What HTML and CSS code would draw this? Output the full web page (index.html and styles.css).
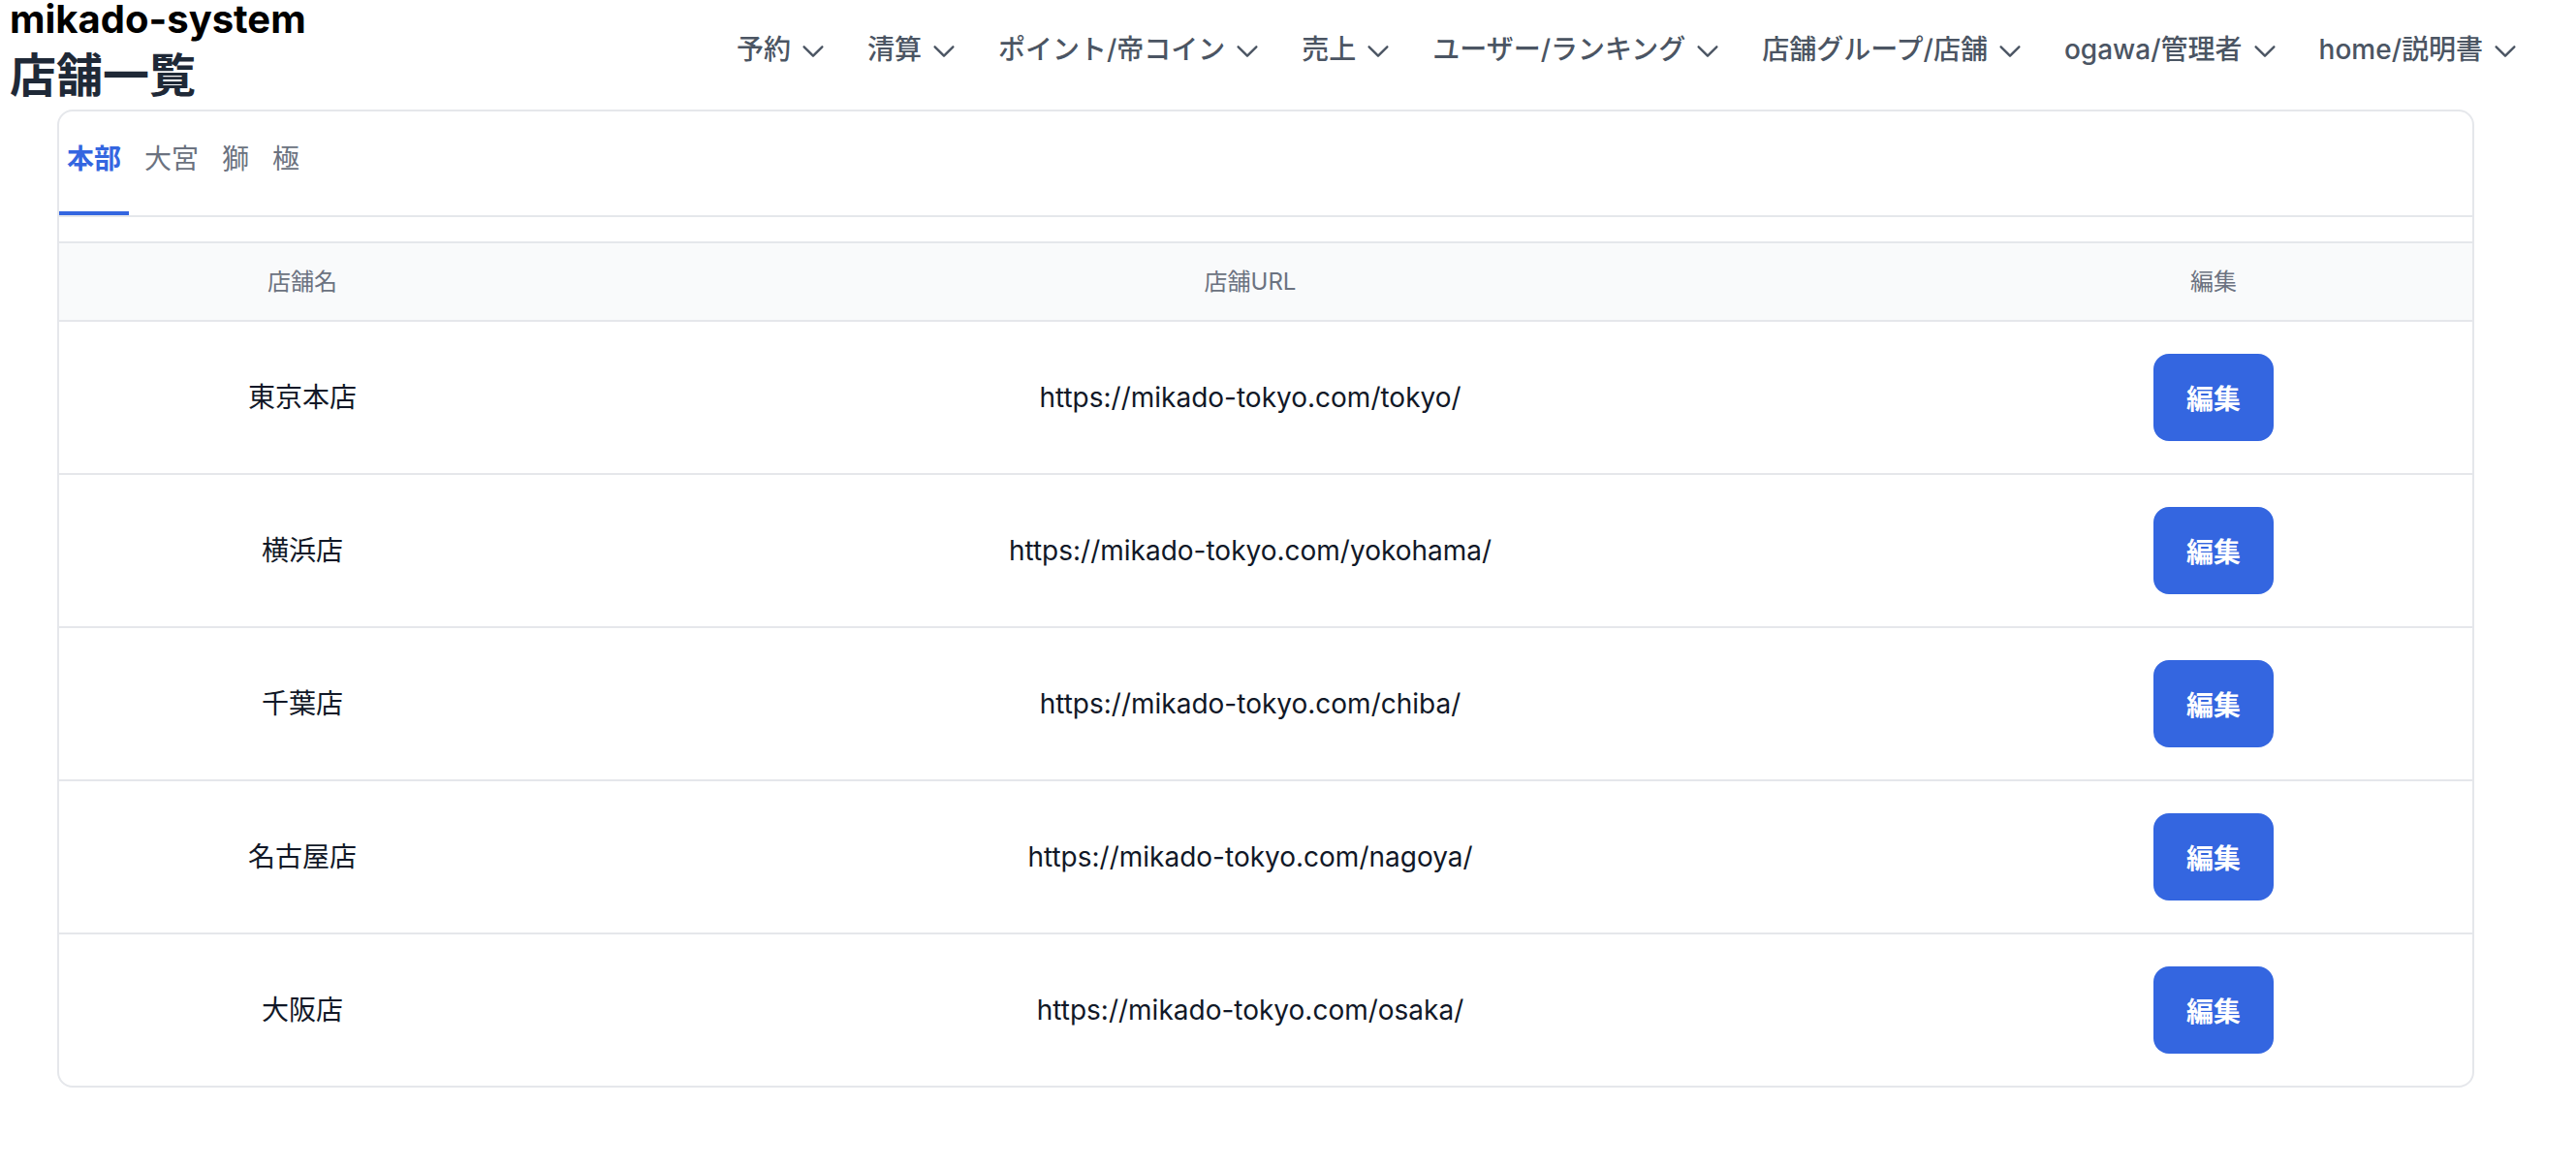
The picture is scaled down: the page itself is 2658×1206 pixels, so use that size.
FILE: index.html
```html
<!DOCTYPE html>
<html lang="ja">
<head>
<meta charset="utf-8">
<title>店舗一覧</title>
<link rel="stylesheet" href="styles.css">
</head>
<body>
<header class="topbar">
  <div class="brand">
    <div class="brand-name">mikado-system</div>
    <h1 class="page-title">店舗一覧</h1>
  </div>
  <nav class="menu">
    <a class="menu-item">予約<svg class="chev" viewBox="0 0 24 24"><path d="M19.5 8.25l-7.5 7.5-7.5-7.5"/></svg></a>
    <a class="menu-item">清算<svg class="chev" viewBox="0 0 24 24"><path d="M19.5 8.25l-7.5 7.5-7.5-7.5"/></svg></a>
    <a class="menu-item">ポイント/帝コイン<svg class="chev" viewBox="0 0 24 24"><path d="M19.5 8.25l-7.5 7.5-7.5-7.5"/></svg></a>
    <a class="menu-item">売上<svg class="chev" viewBox="0 0 24 24"><path d="M19.5 8.25l-7.5 7.5-7.5-7.5"/></svg></a>
    <a class="menu-item">ユーザー/ランキング<svg class="chev" viewBox="0 0 24 24"><path d="M19.5 8.25l-7.5 7.5-7.5-7.5"/></svg></a>
    <a class="menu-item">店舗グループ/店舗<svg class="chev" viewBox="0 0 24 24"><path d="M19.5 8.25l-7.5 7.5-7.5-7.5"/></svg></a>
    <a class="menu-item">ogawa/管理者<svg class="chev" viewBox="0 0 24 24"><path d="M19.5 8.25l-7.5 7.5-7.5-7.5"/></svg></a>
    <a class="menu-item">home/説明書<svg class="chev" viewBox="0 0 24 24"><path d="M19.5 8.25l-7.5 7.5-7.5-7.5"/></svg></a>
  </nav>
</header>
<main class="content">
  <section class="card">
    <div class="tabs">
      <button class="tab active">本部</button>
      <button class="tab">大宮</button>
      <button class="tab">獅</button>
      <button class="tab">極</button>
    </div>
    <table class="stores">
      <colgroup>
        <col class="col-name">
        <col class="col-url">
        <col class="col-edit">
      </colgroup>
      <thead>
        <tr><th>店舗名</th><th>店舗URL</th><th>編集</th></tr>
      </thead>
      <tbody>
        <tr><td>東京本店</td><td>https://mikado-tokyo.com/tokyo/</td><td><button class="edit-btn">編集</button></td></tr>
        <tr><td>横浜店</td><td>https://mikado-tokyo.com/yokohama/</td><td><button class="edit-btn">編集</button></td></tr>
        <tr><td>千葉店</td><td>https://mikado-tokyo.com/chiba/</td><td><button class="edit-btn">編集</button></td></tr>
        <tr><td>名古屋店</td><td>https://mikado-tokyo.com/nagoya/</td><td><button class="edit-btn">編集</button></td></tr>
        <tr><td>大阪店</td><td>https://mikado-tokyo.com/osaka/</td><td><button class="edit-btn">編集</button></td></tr>
      </tbody>
    </table>
  </section>
</main>
</body>
</html>
```
FILE: styles.css
```css
* { box-sizing: border-box; }

body {
  margin: 0;
  background: #ffffff;
  font-family: Inter, "Noto Sans CJK JP", sans-serif;
  color: #111827;
}

.topbar {
  display: flex;
  align-items: flex-start;
  height: 113px;
  padding: 0 58px 0 10px;
}

.brand-name {
  font-size: 40px;
  line-height: 40px;
  font-weight: 700;
  color: #000000;
}

.page-title {
  margin: 6px 0 0;
  font-size: 48px;
  line-height: 64px;
  font-weight: 700;
  color: #1f2937;
}

.menu {
  margin-left: auto;
  margin-top: 31px;
  display: flex;
  gap: 41px;
}

.menu-item {
  display: flex;
  align-items: center;
  gap: 8px;
  font-size: 28px;
  line-height: 40px;
  font-weight: 500;
  color: #4b5563;
  cursor: pointer;
}

.chev {
  width: 30px;
  height: 30px;
  margin-top: 4px;
  fill: none;
  stroke: currentColor;
  stroke-width: 1.9;
  stroke-linecap: round;
  stroke-linejoin: round;
}

.content {
  padding-left: 59px;
}

.card {
  width: 2494px;
  border: 2px solid #e5e7eb;
  border-radius: 16px;
  overflow: hidden;
  background: #ffffff;
}

.tabs {
  display: flex;
  gap: 8px;
  border-bottom: 2px solid #e5e7eb;
}

.tab {
  padding: 29px 8px 34px;
  border: none;
  border-bottom: 4px solid transparent;
  background: none;
  font-family: inherit;
  font-size: 28px;
  line-height: 40px;
  font-weight: 400;
  color: #6b7280;
  cursor: pointer;
}

.tab.active {
  color: #3466e0;
  border-bottom-color: #3466e0;
  font-weight: 700;
}

.stores {
  width: 100%;
  margin-top: 25px;
  border-collapse: separate;
  border-spacing: 0;
  table-layout: fixed;
}

.col-name { width: 502px; }
.col-url { width: 1454px; }
.col-edit { width: 534px; }

.stores th {
  padding: 24px 0 23px;
  background: #f9fafb;
  border-top: 2px solid #e5e7eb;
  border-bottom: 2px solid #e5e7eb;
  font-size: 24px;
  line-height: 32px;
  font-weight: 400;
  color: #6b7280;
  text-align: center;
}

.stores td {
  padding: 33px 0;
  border-bottom: 2px solid #e5e7eb;
  font-size: 28px;
  line-height: 40px;
  color: #111827;
  text-align: center;
  vertical-align: middle;
}

.stores tbody tr:last-child td {
  border-bottom: none;
}

.edit-btn {
  display: block;
  margin: 0 auto;
  width: 124px;
  height: 90px;
  border: none;
  border-radius: 16px;
  background: #3466e0;
  color: #ffffff;
  font-family: inherit;
  font-size: 28px;
  font-weight: 700;
  cursor: pointer;
}
```
